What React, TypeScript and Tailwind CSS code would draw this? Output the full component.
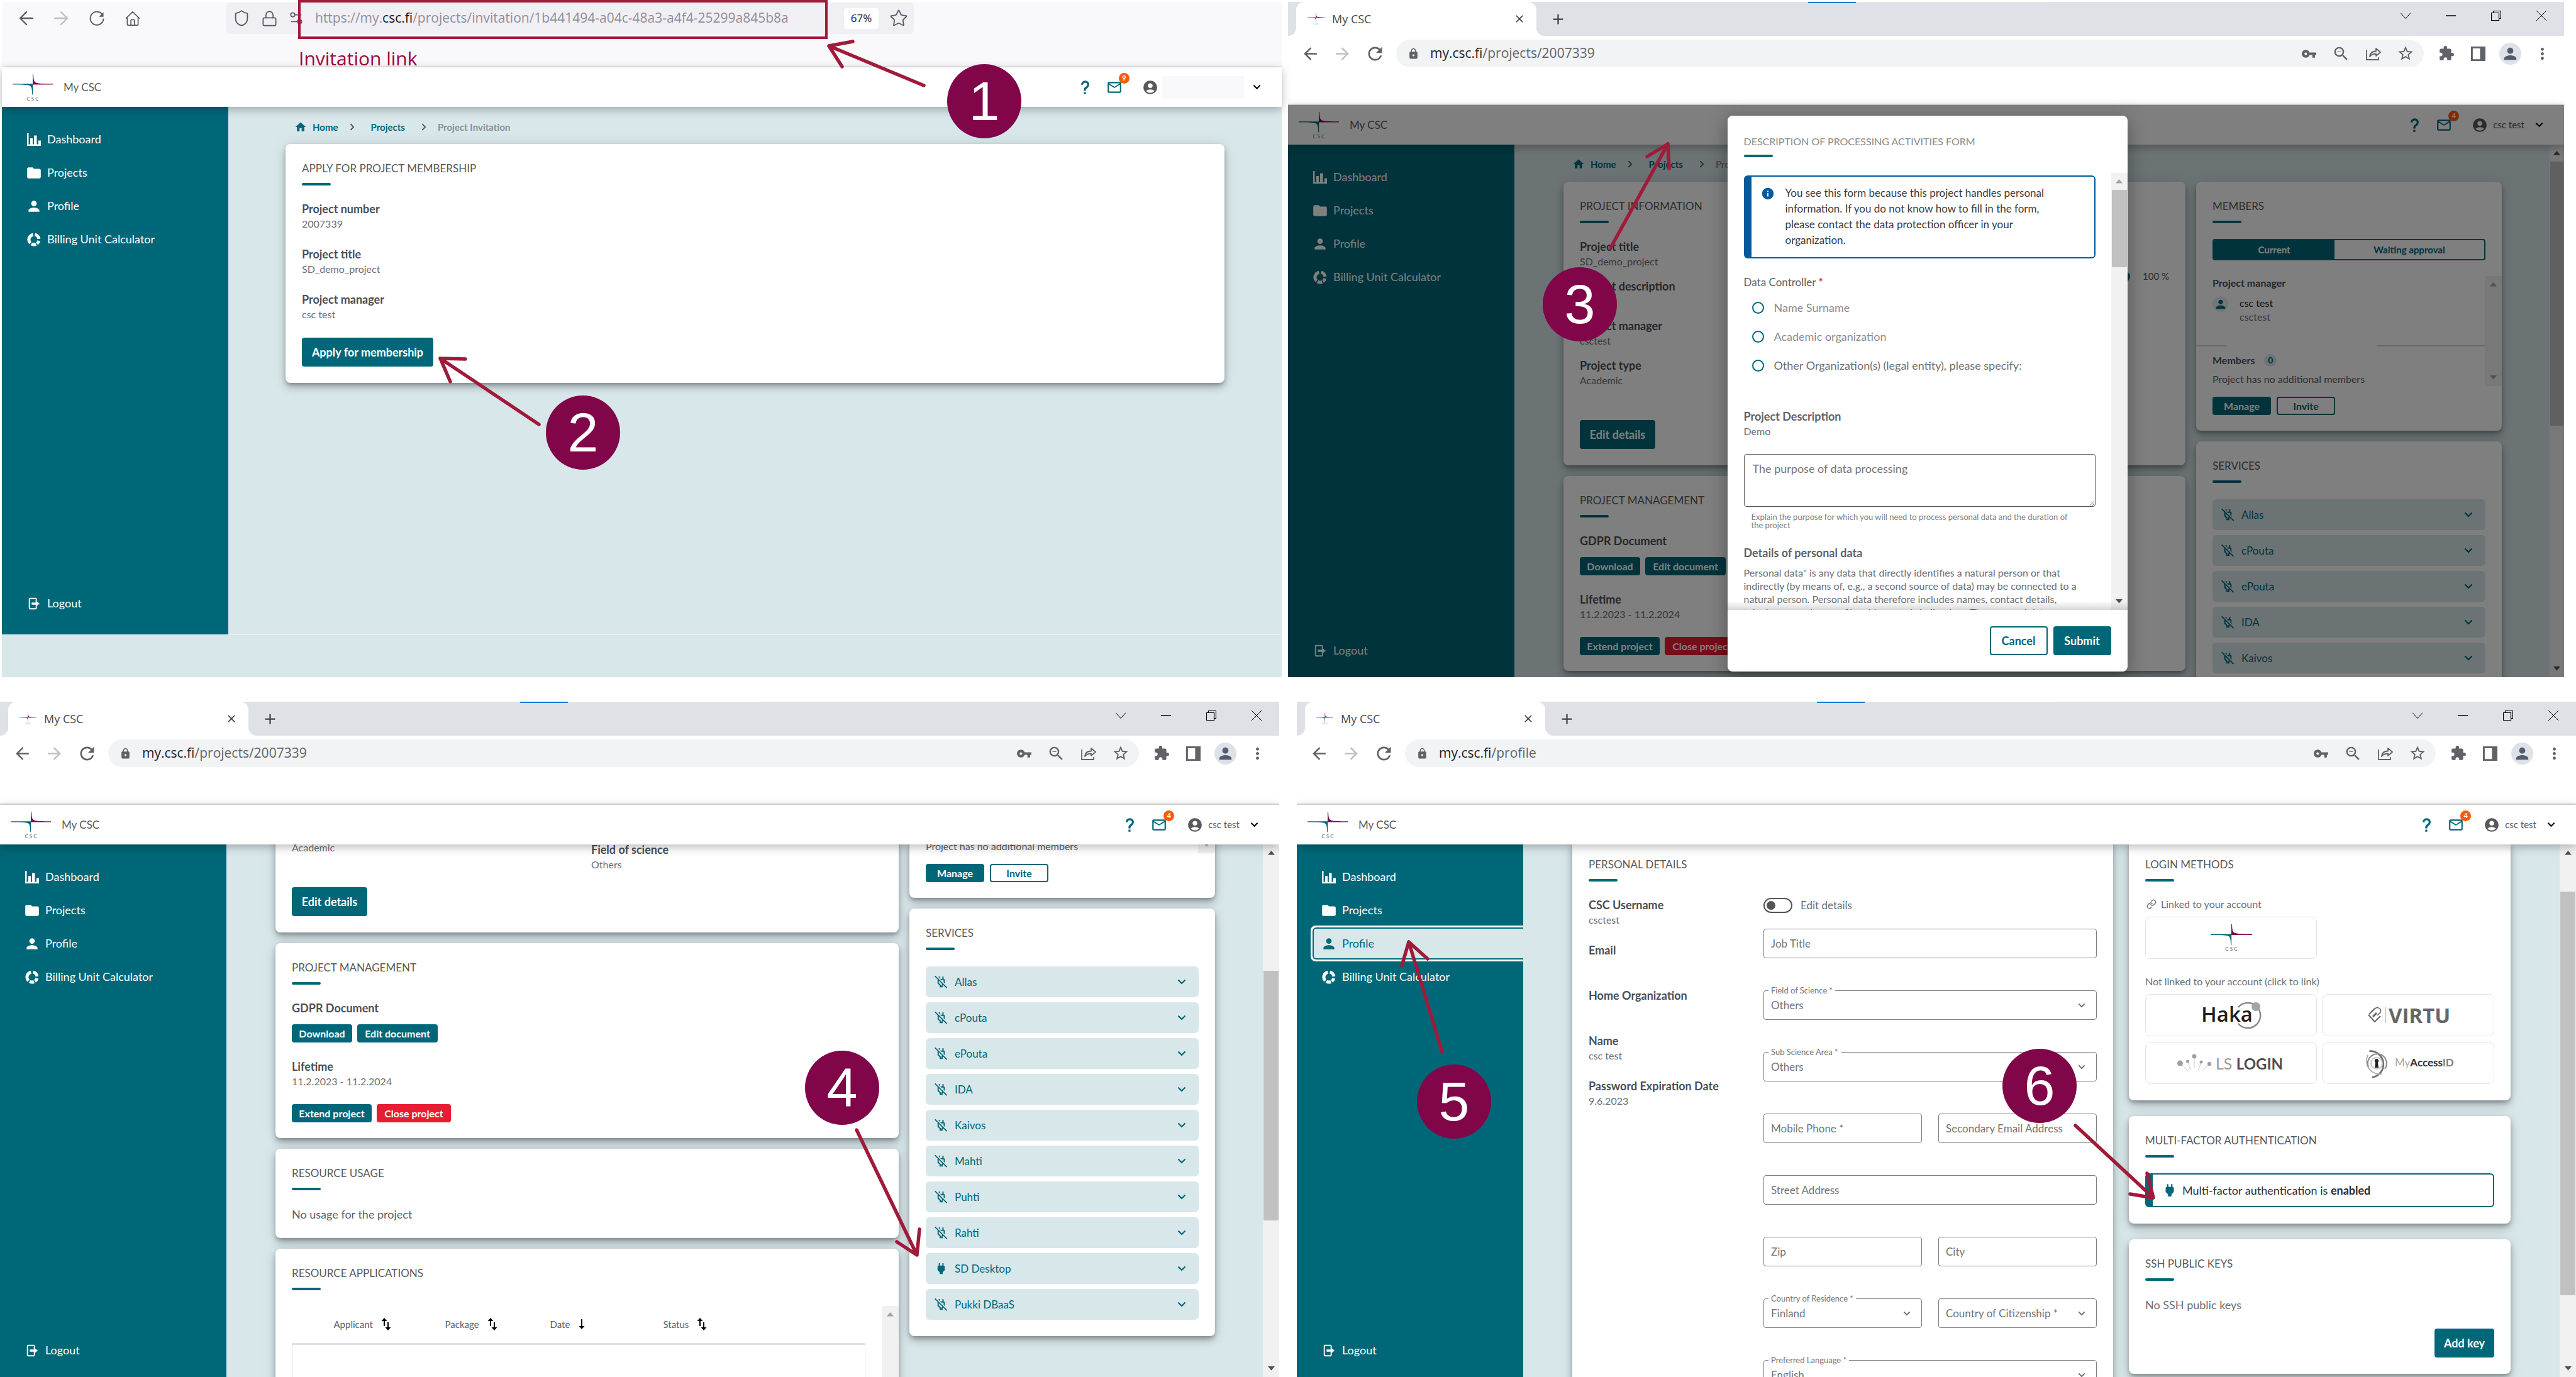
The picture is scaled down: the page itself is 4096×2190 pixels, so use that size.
import React, { useId } from "react";
import {
  MdAccountCircle,
  MdAdd,
  MdArrowBack,
  MdArrowForward,
  MdClose,
  MdExtension,
  MdFolder,
  MdHome,
  MdInfo,
  MdLock,
  MdMailOutline,
  MdMoreVert,
  MdOutlineZoomOut,
  MdPerson,
  MdRefresh,
  MdStarOutline,
  MdVpnKey,
} from "react-icons/md";
import { ArrowLeft, ArrowRight, Lock, Link as LinkIcon, Settings2, Shield, Star } from "lucide-react";

/* ---------- icons ---------- */

type IconProps = { className?: string };

function CscMark({ className }: IconProps) {
  return (
    <svg viewBox="0 0 64 42" className={className} aria-label="CSC" role="img">
      <path d="M32 16.600V0h1c.3 8 .8 12 4.200 13.400C41 14.900 50 15 64 15.200v1.400z" fill="#7d0552" />
      <path d="M32.200 15.200V32.500h-1c-.3-9-.8-13-4.200-14.400C23 16.800 14 16.700 0 16.600v-1.400z" fill="#006778" />
      <text x="32" y="41.500" textAnchor="middle" fontSize="8" fill="#5f6a70" fontFamily="Lato, sans-serif">
        C S C
      </text>
    </svg>
  );
}

function BarsIcon({ className }: IconProps) {
  return (
    <svg viewBox="0 0 22 20" className={className} fill="currentColor" aria-hidden="true">
      <path d="M0 0h2.500v17.500H5V8h4v9.500h2V3.500h4.500v14H18v-6h4V20H0z" />
    </svg>
  );
}

function DonutIcon({ className }: IconProps) {
  return (
    <svg viewBox="0 0 22 22" className={className} fill="none" stroke="currentColor" strokeWidth="5" aria-hidden="true">
      <path d="M12.5 3.1A8 8 0 0 1 18.9 9.8" />
      <path d="M18.8 12.8A8 8 0 0 1 15.6 17.5" />
      <path d="M14.2 18.4A8 8 0 0 1 7 17.9" />
      <path d="M5.3 16.7A8 8 0 0 1 9.4 3.2" />
    </svg>
  );
}

function LogoutIcon({ className }: IconProps) {
  return (
    <svg viewBox="0 0 24 24" className={className} fill="currentColor" aria-hidden="true">
      <path d="M5 2h10a2 2 0 0 1 2 2v4h-2V4H5v16h10v-4h2v4a2 2 0 0 1-2 2H5a2 2 0 0 1-2-2V4a2 2 0 0 1 2-2z" />
      <path d="M8 10h7V6.500L22 12l-7 5.500V14H8z" />
    </svg>
  );
}

function PlugIcon({ className }: IconProps) {
  return (
    <svg viewBox="0 0 24 24" className={className} fill="currentColor" aria-hidden="true">
      <path d="M16,7V3H14V7H10V3H8V7H8C7,7 6,8 6,9V14.5L9.5,18V21H14.5V18L18,14.5V9C18,8 17,7 16,7Z" />
    </svg>
  );
}

function PlugOffIcon({ className }: IconProps) {
  return (
    <svg viewBox="0 0 24 24" className={className} fill="currentColor" aria-hidden="true">
      <path d="M22.11 21.46L2.39 1.73L1.11 3L6.25 8.14C6.1 8.41 6 8.7 6 9V14.5L9.5 18V21H14.5V18L15.31 17.2L20.84 22.73L22.11 21.46M13.09 16.59L12.5 17.17V19H11.5V17.17L8 13.65V9.89L13.89 15.79L13.09 16.59M12.2 9L10.2 7H14V3H16V7C17 7 18 8 18 9V14.5L17.85 14.65L16 12.8V9H12.2M10 6.8L8 4.8V3H10V6.8Z" />
    </svg>
  );
}

function HelpIcon({ className }: IconProps) {
  return (
    <svg viewBox="6 2 12 20" className={className} fill="currentColor" aria-hidden="true">
      <path d="M10,19H13V22H10V19M12,2C17.35,2.22 19.68,7.62 16.5,11.67C15.67,12.67 14.33,13.33 13.67,14.17C13,15 13,16 13,17H10C10,15.33 10,13.92 10.67,12.92C11.33,11.92 12.67,11.33 13.5,10.67C15.92,8.43 15.32,5.26 12,5A3,3 0 0,0 9,8H6A6,6 0 0,1 12,2Z" />
    </svg>
  );
}

function SortIcon({ className }: IconProps) {
  return (
    <svg viewBox="0 0 16 20" className={className} fill="#000" aria-hidden="true">
      <path d="M4 5v8h2V5h3.500L5 0 .500 5zM10 7h2v8h3.500L11 20l-4.500-5H10z" />
    </svg>
  );
}

function Caret({ className }: IconProps) {
  return (
    <svg viewBox="0 0 14 9" className={className} fill="none" stroke="currentColor" aria-hidden="true">
      <path d="M1.5 1.5L7 7l5.5-5.5" strokeWidth="2.200" />
    </svg>
  );
}

function ShareIcon({ className }: IconProps) {
  return (
    <svg viewBox="0 0 24 24" className={className} fill="none" stroke="currentColor" strokeWidth="1.800" aria-hidden="true">
      <path d="M1 6v16h19v-4" />
      <path d="M6 17c.5-6 4-8.5 10-8.500V4l7 6-7 6v-3.500c-5 0-7.5 1-10 4.500z" strokeLinejoin="round" />
    </svg>
  );
}

function SidePanelIcon({ className }: IconProps) {
  return (
    <svg viewBox="0 0 24 24" className={className} fill="currentColor" aria-hidden="true">
      <path fillRule="evenodd" d="M0 0h24v24H0zM3 3v18h12V3z" />
    </svg>
  );
}

function HouseLine({ className }: IconProps) {
  return (
    <svg viewBox="0 0 24 24" className={className} fill="none" stroke="currentColor" strokeWidth="1.800" strokeLinejoin="round" strokeLinecap="round" aria-hidden="true">
      <path d="M1 11.500L12 1l11 10.500M3 10v12a1 1 0 0 0 1 1h16a1 1 0 0 0 1-1V10M9 23v-8a1 1 0 0 1 1-1h4a1 1 0 0 1 1 1v8" />
    </svg>
  );
}

function ReloadLine({ className }: IconProps) {
  return (
    <svg viewBox="0 0 24 24" className={className} fill="none" stroke="currentColor" strokeWidth="2" strokeLinecap="round" aria-hidden="true">
      <path d="M21.500 6A11 11 0 1 0 23 13" />
      <path d="M23 1.500V9h-7.500z" fill="currentColor" stroke="none" />
    </svg>
  );
}

/* ---------- shared building blocks ---------- */

function Triangle({ up, dark }: { up?: boolean; dark?: boolean }) {
  return (
    <svg viewBox="0 0 10 6" className={dark ? "w-[11px] text-[#4f4f4f]" : "w-[11px] text-[#a3a3a3]"} fill="currentColor" aria-hidden="true">
      <path d={up ? "M0 6L5 0l5 6z" : "M0 0l5 6 5-6z"} />
    </svg>
  );
}

function ScrollTrack({ className, children, upDark = true, downDark = true }: { className: string; children?: React.ReactNode; upDark?: boolean; downDark?: boolean }) {
  return (
    <div aria-hidden="true" className={`flex shrink-0 flex-col items-center bg-[#f1f1f1] ${className}`}>
      <span className="flex h-[27px] items-center">
        <Triangle up dark={upDark} />
      </span>
      <div className="flex min-h-0 w-full flex-1 flex-col px-px">{children}</div>
      <span className="flex h-[27px] items-center">
        <Triangle dark={downDark} />
      </span>
    </div>
  );
}

function Card({ title, className = "", children }: { title: string; className?: string; children?: React.ReactNode }) {
  return (
    <section
      className={`rounded-lg bg-white px-[26px] pt-[27px] shadow-[0_4px_7px_-1px_rgba(0,0,0,0.3),0_8px_13px_rgba(0,0,0,0.14),0_1px_24px_rgba(0,0,0,0.1)] ${className}`}
    >
      <h2 className="text-[17px] leading-6 whitespace-nowrap text-[#595959]">{title}</h2>
      <div className="mt-[11px] h-1 w-[46px] rounded-sm bg-[#006778]" />
      {children}
    </section>
  );
}

function Info({ label, value }: { label: string; value?: string }) {
  return (
    <div className="h-[46px] whitespace-nowrap">
      <dt className="text-[18px] leading-[23px] font-bold text-[#4a4f57]">{label}</dt>
      {value && <dd className="text-base leading-[23px] text-[#6b6f78]">{value}</dd>}
    </div>
  );
}

const bigButton = "h-[46px] rounded text-[18px] font-bold whitespace-nowrap";
const smallButton = "h-[29px] rounded text-base leading-none font-bold whitespace-nowrap";

function CscHeader({ count, user }: { count: string; user?: string }) {
  return (
    <header className="relative z-10 flex h-[63px] shrink-0 items-center bg-white pr-[33px] pl-[17px] shadow-[0_4px_14px_rgba(0,0,0,0.28)]">
      <CscMark className="h-[42px] w-16" />
      <span className="ml-[17px] text-[17px] text-[#595959]">My CSC</span>
      <div className="ml-auto flex items-center">
        <button type="button" aria-label="Help" className="mr-[29px] text-[#006778]">
          <HelpIcon className="h-[22px] w-[13px]" />
        </button>
        <button type="button" aria-label="Messages" className="relative mr-[35px] text-[#006778]">
          <MdMailOutline className="-mx-[2px] h-[26px] w-[26px]" />
          <span className="absolute -top-[10px] -right-[13px] flex h-[17px] w-[17px] items-center justify-center rounded-full bg-[#ff5a00] text-[11px] font-bold text-white">
            {count}
          </span>
        </button>
        <button type="button" className="flex items-center">
          <MdAccountCircle className="-m-[2px] h-[26px] w-[26px] text-[#595959]" />
          {user ? (
            <span className="mr-[17px] ml-[10px] text-[15px] text-[#595959]">{user}</span>
          ) : (
            <span className="mr-[14px] ml-2 h-[36px] w-[130px] bg-[#f9f9fb]" />
          )}
          <Caret className="h-[9px] w-[13px] text-black" />
        </button>
      </div>
    </header>
  );
}

const navItems = [
  { name: "Dashboard", icon: <BarsIcon className="h-5 w-[22px]" /> },
  { name: "Projects", icon: <MdFolder className="-m-[2px] h-[26px] w-[26px]" /> },
  { name: "Profile", icon: <MdPerson className="-m-[2px] h-[26px] w-[26px]" /> },
  { name: "Billing Unit Calculator", icon: <DonutIcon className="h-[22px] w-[22px]" /> },
];

function Sidebar({ active, logoutClass = "mb-4" }: { active?: string; logoutClass?: string }) {
  return (
    <nav className="flex w-[360px] shrink-0 flex-col bg-[#006778] pt-[25px] text-[18px] text-white">
      {navItems.map((item) =>
        item.name === active ? (
          <a
            key={item.name}
            href="#profile"
            className="-my-[2px] ml-[22px] block h-[57px] rounded-l-lg bg-white py-[3px] pl-[3px] text-[#006778]"
          >
            <span className="flex h-full items-center gap-[10px] rounded-l-md border-y-2 border-l-2 border-[#006778] bg-[#d8e7ea] pl-[13px]">
              {item.icon}
              {item.name}
            </span>
          </a>
        ) : (
          <a key={item.name} href="#nav" className="flex h-[53px] items-center gap-[10px] pl-10">
            {item.icon}
            {item.name}
          </a>
        ),
      )}
      <a href="#logout" className={`mt-auto flex h-[53px] items-center gap-[10px] pl-10 ${logoutClass}`}>
        <LogoutIcon className="h-[22px] w-[22px]" />
        Logout
      </a>
    </nav>
  );
}

function Breadcrumb({ last }: { last: string }) {
  return (
    <nav aria-label="Breadcrumb" className="flex h-6 items-center pl-[14px] text-[15px] font-bold text-[#006778]">
      <MdHome className="mr-[9px] h-5 w-5" />
      <a href="#home">Home</a>
      <Caret className="mr-6 ml-4 h-[8px] w-[12px] -rotate-90 text-[#595959]" />
      <a href="#projects">Projects</a>
      <Caret className="mr-4 ml-6 h-[8px] w-[12px] -rotate-90 text-[#595959]" />
      <span className="whitespace-nowrap text-[#8a8f94]">{last}</span>
    </nav>
  );
}

/* ---------- browser frames ---------- */

function ChromeFrame({ host, path, children, grow = "flex-1" }: { host: string; path: string; children: React.ReactNode; grow?: string }) {
  const side = "flex w-[51px] items-center justify-center";
  return (
    <section className={`relative flex min-h-0 min-w-0 flex-col overflow-hidden bg-white ${grow}`} style={{ fontFamily: "Lato, sans-serif" }}>
      <div className="relative flex h-[54px] shrink-0 items-center bg-[#dee1e6]" style={{ fontFamily: '"Open Sans", sans-serif' }}>
        <div className="absolute top-0 left-[827px] flex h-[2px] w-[382px] bg-[#e5e5e5]">
          <span className="w-[76px] bg-[#0078d7]" />
        </div>
        <span className="h-[14px] w-[13px] self-end bg-white">
          <span className="block h-full rounded-br-[13px] bg-[#dee1e6]" />
        </span>
        <div className="flex h-full w-[382px] items-center rounded-t-[13px] bg-white pr-[17px] pl-[18px]">
          <CscMark className="h-[20px] w-[27px]" />
          <span className="ml-3 text-[18px] text-[#45474a]">My CSC</span>
          <button type="button" aria-label="Close tab" className="ml-auto text-[#3c4043]">
            <MdClose className="h-[20px] w-[20px]" />
          </button>
        </div>
        <span className="h-[14px] w-[13px] self-end bg-white">
          <span className="block h-full rounded-bl-[13px] bg-[#dee1e6]" />
        </span>
        <button type="button" aria-label="New tab" className="ml-[8px] text-[#3c4043]">
          <MdAdd className="h-[27px] w-[27px]" />
        </button>
        <div className="mr-[28px] ml-auto flex h-[44px] items-center gap-[56px] self-start text-black">
          <svg viewBox="0 0 16 16" className="h-4 w-4" fill="none" stroke="currentColor" aria-hidden="true"><path d="M0 3.500l8 9 8-9" /></svg>
          <svg viewBox="0 0 16 16" className="h-4 w-4" fill="none" stroke="currentColor" aria-hidden="true"><path d="M0 8h16" strokeWidth="1.500" /></svg>
          <svg viewBox="0 0 16 16" className="h-4 w-4" fill="none" stroke="currentColor" aria-hidden="true"><path d="M.5 3.500h12v12H.5zM3.500 3.500v-3h12v12h-3" strokeWidth="1.200" /></svg>
          <svg viewBox="0 0 16 16" className="h-4 w-4" fill="none" stroke="currentColor" aria-hidden="true"><path d="M0 0l16 16M16 0L0 16" /></svg>
        </div>
      </div>
      <div className="flex h-[110px] shrink-0 border-b-2 border-[#dadada] pt-[6px]" style={{ fontFamily: '"Open Sans", sans-serif' }}>
        <div className="flex h-[44px] w-full items-center pl-[20px] text-[#5f6368]">
          <MdArrowBack className="h-[31px] w-[31px]" />
          <MdArrowForward className="ml-[20px] h-[31px] w-[31px] text-[#bdc1c6]" />
          <MdRefresh className="ml-[20px] h-[33px] w-[33px]" />
          <div className="ml-[17px] flex h-full min-w-0 flex-1 items-center rounded-full bg-[#f1f3f4] pr-[4px] pl-[18px]">
            <MdLock className="h-[19px] w-[19px]" />
            <span className="ml-[17px] text-[21px] text-[#5f6368]">
              <span className="text-[#202124]">{host}</span>
              {path}
            </span>
            <div className="ml-auto flex">
              <span className={side}><MdVpnKey className="h-[25px] w-[25px]" /></span>
              <span className={side}><MdOutlineZoomOut className="h-[29px] w-[29px]" /></span>
              <span className={side}><ShareIcon className="h-[24px] w-[24px]" /></span>
              <span className={side}><MdStarOutline className="h-[28px] w-[28px]" /></span>
            </div>
          </div>
          <div className="mr-[9px] ml-[10px] flex items-center">
            <span className={side}><MdExtension className="h-[26px] w-[26px]" /></span>
            <span className={side}><SidePanelIcon className="h-[23px] w-[23px]" /></span>
            <span className={side}>
              <span className="flex h-[35px] w-[35px] items-center justify-center rounded-full bg-[#dee1e6]">
                <MdPerson className="h-[29px] w-[29px] text-[#525c70]" />
              </span>
            </span>
            <span className={side}><MdMoreVert className="h-[29px] w-[29px]" /></span>
          </div>
        </div>
      </div>
      {children}
    </section>
  );
}

/* ---------- first window: project invitation ---------- */

function InvitationWindow() {
  return (
    <section className="flex min-h-0 min-w-0 flex-[2035] flex-col bg-[#d8e7ea]" style={{ fontFamily: "Lato, sans-serif" }}>
      <div className="flex h-[104px] shrink-0 border-b border-[#bdbdbd] bg-[#f9f9fb]" style={{ fontFamily: '"Open Sans", sans-serif' }}>
        <div className="mt-[1px] flex h-[50px] w-full items-center pl-[22px] text-[#5b5b66]">
          <ArrowLeft className="h-[34px] w-[34px]" strokeWidth={1.6} />
          <ArrowRight className="ml-[21px] h-[34px] w-[34px] text-[#bdbdc2]" strokeWidth={1.6} />
          <ReloadLine className="ml-[28px] h-[23px] w-[24px]" />
          <HouseLine className="ml-[33px] h-[23px] w-[24px]" />
          <div className="ml-[137px] flex h-full w-[1093px] items-center rounded-md bg-[#f0f0f4] pl-[10px]">
            <Shield className="h-[28px] w-[28px]" strokeWidth={1.6} />
            <Lock className="ml-[17px] h-[27px] w-[27px]" strokeWidth={1.6} />
            <Settings2 className="ml-[16px] h-[26px] w-[26px]" strokeWidth={1.6} />
            <span className="ml-[17px] text-[21px] whitespace-nowrap text-[#8f8f9b]">
              https://my.<span className="text-[#15141a]">csc.fi</span>/projects/invitation/1b441494-a04c-48a3-a4f4-25299a845b8a
            </span>
            <span className="mr-[17px] ml-auto flex h-[33px] w-[55px] items-center justify-center rounded bg-white text-[17px] text-[#15141a]">67%</span>
            <Star className="mr-[9px] h-[30px] w-[30px]" strokeWidth={1.5} />
          </div>
        </div>
      </div>
      <CscHeader count="9" />
      <div className="flex min-h-0 flex-1 border-b border-[#eef4f5]">
        <Sidebar logoutClass="mb-[23px]" />
        <main className="min-w-0 flex-1 px-[91px] pt-5">
          <Breadcrumb last="Project Invitation" />
          <Card title="APPLY FOR PROJECT MEMBERSHIP" className="mt-[15px] pb-[26px]">
            <dl className="mt-[26px] flex flex-col gap-[26px]">
              <Info label="Project number" value="2007339" />
              <Info label="Project title" value="SD_demo_project" />
              <Info label="Project manager" value="csc test" />
            </dl>
            <button type="button" className={`mt-[26px] w-[209px] bg-[#006778] text-white ${bigButton}`}>Apply for membership</button>
          </Card>
        </main>
      </div>
      <div className="h-[67px] shrink-0" />
    </section>
  );
}

/* ---------- project page, used in two windows ---------- */

const services = ["Allas", "cPouta", "ePouta", "IDA", "Kaivos", "Mahti", "Puhti", "Rahti", "SD Desktop", "Pukki DBaaS"];

function ResourceCards() {
  return (
    <>
      <Card title="RESOURCE USAGE" className="pb-[26px]">
        <p className="mt-[26px] text-[18px] leading-6 text-[#5a5f68]">No usage for the project</p>
      </Card>
      <Card title="RESOURCE APPLICATIONS" className="pb-0">
        <div className="mt-[25px] -mr-[26px] flex h-[260px]">
          <table className="mr-[26px] h-full min-w-0 flex-1 table-fixed border-collapse text-[15px] text-[#595f68]">
            <thead>
              <tr className="h-[60px]">
                <th scope="col" className="w-[243px] pl-[66px] text-left font-normal"><span className="flex items-center">Applicant<SortIcon className="ml-[13px] h-5 w-4" /></span></th>
                <th scope="col" className="w-[167px] text-left font-normal"><span className="flex items-center">Package<SortIcon className="ml-[13px] h-5 w-4" /></span></th>
                <th scope="col" className="w-[180px] text-left font-normal"><span className="flex items-center">Date
                  <svg viewBox="0 0 10 16" className="ml-[14px] h-4 w-[10px]" fill="#000" aria-hidden="true"><path d="M4 0h2v11h3.500L5 16 .5 11H4z" /></svg>
                </span></th>
                <th scope="col" className="text-left font-normal"><span className="flex items-center">Status<SortIcon className="ml-[13px] h-5 w-4" /></span></th>
              </tr>
            </thead>
            <tbody>
              <tr>
                <td colSpan={4} className="border border-t-[3px] border-[#e0e0e0]" />
              </tr>
            </tbody>
          </table>
          <ScrollTrack className="w-[27px]" upDark={false} downDark={false} />
        </div>
      </Card>
    </>
  );
}

function ProjectPage({ scrollClass = "", full = false }: { scrollClass?: string; full?: boolean }) {
  return (
    <main className="min-w-0 flex-1 overflow-hidden bg-[#d8e7ea] pr-[76px] pl-[78px]">
      <div className={`pt-[19px] ${scrollClass}`}>
        <Breadcrumb last="Project Details" />
        <div className="mt-4 flex items-start gap-[17px]">
          <div className="flex min-w-0 flex-1 flex-col gap-[17px]">
            <Card title="PROJECT INFORMATION" className="pb-[26px]">
              <div className="mt-[26px] flex">
                <dl className="flex w-[476px] flex-col gap-[17px]">
                  <Info label="Project title" value="SD_demo_project" />
                  <Info label="Project description" />
                  <Info label="Project manager" value="csctest" />
                  <Info label="Project type" value="Academic" />
                </dl>
                <div className="flex-1 pt-[47px]">
                  <div className="flex h-[23px] items-center gap-5 text-[15px] text-[#595959]">
                    <div className="h-4 flex-1 rounded-full bg-[#006778]" />
                    <span>100 %</span>
                  </div>
                  <dl className="mt-[146px]">
                    <Info label="Field of science" value="Others" />
                  </dl>
                </div>
              </div>
              <button type="button" className={`mt-[25px] w-[120px] bg-[#006778] text-white ${bigButton}`}>Edit details</button>
            </Card>
            <Card title="PROJECT MANAGEMENT" className="pb-[25px]">
              <h3 className="mt-[26px] text-[18px] leading-[23px] font-bold text-[#4a4f57]">GDPR Document</h3>
              <div className="mt-[14px] flex gap-2">
                <button type="button" className={`w-[96px] bg-[#006778] text-white ${smallButton}`}>Download</button>
                <button type="button" className={`w-[128px] bg-[#006778] text-white ${smallButton}`}>Edit document</button>
              </div>
              <dl className="mt-[27px]">
                <Info label="Lifetime" value="11.2.2023 - 11.2.2024" />
              </dl>
              <div className="mt-[25px] flex gap-2">
                <button type="button" className={`w-[127px] bg-[#006778] text-white ${smallButton}`}>Extend project</button>
                <button type="button" className={`w-[118px] bg-[#e81c32] text-white ${smallButton}`}>Close project</button>
              </div>
            </Card>
            {full && <ResourceCards />}
          </div>
          <div className="flex w-[486px] shrink-0 flex-col gap-[17px]">
            <Card title="MEMBERS" className="pb-[25px]">
              <div className="mt-[25px] flex h-[34px] overflow-hidden rounded border-2 border-[#006778] text-[15px] font-bold text-[#006778]">
                <button type="button" className="w-[192px] bg-[#006778] text-white">Current</button>
                <button type="button" className="flex-1">Waiting approval</button>
              </div>
              <div className="mt-[25px] -mr-[26px] flex">
                <div className="min-w-0 flex-1 whitespace-nowrap">
                  <h3 className="text-base leading-[22px] font-bold text-[#4a4f57]">Project manager</h3>
                  <div className="mt-[10px] flex gap-[18px]">
                    <span className="flex h-[25px] w-[25px] items-center justify-center rounded-full bg-[#e3eef0] text-[#006778]"><MdPerson className="h-[22px] w-[22px]" /></span>
                    <div className="text-base leading-[22px] text-[#6b6f78]">
                      <p className="text-[#22262b]">csc test</p>
                      <p>csctest</p>
                    </div>
                  </div>
                  <div className="mt-[34px] -ml-[26px] flex justify-between"><span className="h-[2px] w-[49px] bg-[#d5d5d5]" /><span className="h-[2px] w-[172px] bg-[#d5d5d5]" /></div>
                  <div className="mt-[11px] flex h-[22px] items-center text-base font-bold text-[#4a4f57]">
                    Members
                    <span className="ml-[15px] flex h-5 w-5 items-center justify-center rounded-full bg-[#d8e7ea] text-sm text-[#006778]">0</span>
                  </div>
                  <p className="mt-2 text-base leading-[22px] text-[#595f68]">Project has no additional members</p>
                </div>
                <ScrollTrack className="w-[27px]" upDark={false} downDark={false} />
              </div>
              <div className="mt-[17px] flex gap-[9px]">
                <button type="button" className={`w-[93px] bg-[#006778] text-white ${smallButton}`}>Manage</button>
                <button type="button" className={`w-[93px] border-2 border-[#006778] bg-white text-[#006778] ${smallButton}`}>Invite</button>
              </div>
            </Card>
            <Card title="SERVICES" className="pb-[26px]">
              <ul className="mt-[26px] flex flex-col gap-2">
                {(full ? services : services.slice(0, 5)).map((name) => (
                  <li key={name}>
                    <button type="button" className="flex h-[49px] w-full items-center rounded-md bg-[#d8e7ea] pr-[20px] pl-[13px] text-[17px] text-[#006778]">
                      {name === "SD Desktop" ? <PlugIcon className="h-[23px] w-[23px]" /> : <PlugOffIcon className="h-[23px] w-[23px]" />}
                      <span className="ml-[10px]">{name}</span>
                      <Caret className="ml-auto h-[9px] w-[14px]" />
                    </button>
                  </li>
                ))}
              </ul>
            </Card>
          </div>
        </div>
      </div>
    </main>
  );
}

/* ---------- second window: processing activities dialog ---------- */

function RadioRow({ label, textClass }: { label: string; textClass: string }) {
  return (
    <label className={`flex h-[26px] items-center gap-[16px] text-[18px] ${textClass}`}>
      <input type="radio" name="controller" className="h-[19px] w-[19px] appearance-none rounded-full border-2 border-[#006778]" />
      {label}
    </label>
  );
}

function ActivitiesDialog() {
  const purpose = useId();
  return (
    <div className="absolute inset-x-0 top-[164px] bottom-0 z-20 flex justify-center bg-black/50 pt-[17px] pb-[9px] pl-1">
      <div role="dialog" aria-label="Description of processing activities form" className="flex w-[636px] flex-col overflow-hidden rounded-lg bg-white shadow-[0_8px_30px_rgba(0,0,0,0.35)]">
        <div className="h-[91px] shrink-0 px-[26px] pt-[29px]">
          <h2 className="text-base leading-6 whitespace-nowrap text-[#8a8a8a]">DESCRIPTION OF PROCESSING ACTIVITIES FORM</h2>
          <div className="mt-[9px] h-1 w-[46px] rounded-sm bg-[#006778]" />
        </div>
        <div className="relative flex min-h-0 flex-1">
          <div className="min-w-0 flex-1 overflow-hidden pr-[25px] pl-[26px] text-[17px] whitespace-nowrap text-[#5f6368]">
            <div className="mt-1 flex rounded-md border-2 border-l-[12px] border-[#005a9b] pt-[13px] pb-[15px] pl-[16px]">
              <MdInfo className="mt-[3px] -ml-px h-[22px] w-[22px] shrink-0 text-[#005a9b]" />
              <p className="ml-[17px] leading-[25px] text-[#3a3a3a]">
                You see this form because this project handles personal
                <br />
                information. If you do not know how to fill in the form,
                <br />
                please contact the data protection officer in your
                <br />
                organization.
              </p>
            </div>
            <fieldset className="pl-[13px]">
              <legend className="-ml-[13px] pt-[26px] leading-6">
                Data Controller <span className="font-bold text-[#e81c32]">*</span>
              </legend>
              <div className="mt-[15px] flex flex-col gap-[20px]">
                <RadioRow label="Name Surname" textClass="text-[#8c8c8c]" />
                <RadioRow label="Academic organization" textClass="text-[#8c8c8c]" />
                <RadioRow label="Other Organization(s) (legal entity), please specify:" textClass="text-[#6f6f6f]" />
              </div>
            </fieldset>
            <h3 className="mt-[57px] text-[18px] leading-[23px] font-bold">Project Description</h3>
            <p className="text-base leading-[23px] text-[#6b6f78]">Demo</p>
            <textarea
              id={purpose}
              aria-label="The purpose of data processing"
              placeholder="The purpose of data processing"
              className="mt-[25px] block h-[84px] w-full rounded border border-[#555] px-[13px] py-[10px] text-[18px] leading-6 placeholder:text-[#757575]"
            />
            <p className="mt-[10px] pl-3 text-[13px] leading-[13px] text-[#808080]">
              Explain the purpose for which you will need to process personal data and the duration of
              <br />
              the project
            </p>
            <h3 className="mt-[26px] text-[18px] leading-[23px] font-bold">Details of personal data</h3>
            <p className="mt-[9px] text-base leading-[21px] text-[#6b6f78]">
              Personal data&quot; is any data that directly identifies a natural person or that
              <br />
              indirectly (by means of, e.g., a second source of data) may be connected to a
              <br />
              natural person. Personal data therefore includes names, contact details,
              <br />
              telephone number, profile address and similar data. The personal data
            </p>
          </div>
          <ScrollTrack className="w-[26px]" upDark={false}>
            <div className="h-[123px] bg-[#c1c1c1]" />
          </ScrollTrack>
          <div className="absolute inset-x-0 bottom-0 h-[14px] bg-linear-to-b from-transparent to-black/15" />
        </div>
        <div className="flex shrink-0 justify-end gap-[9px] px-[26px] pt-[26px] pb-[26px]">
          <button type="button" className={`w-[92px] border-2 border-[#006778] text-[#006778] ${bigButton}`}>Cancel</button>
          <button type="button" className={`w-[92px] bg-[#006778] text-white ${bigButton}`}>Submit</button>
        </div>
      </div>
    </div>
  );
}

/* ---------- fourth window: profile page ---------- */

const fieldBox = "h-[47px] w-full rounded border border-[#808080] bg-white px-[11px] text-[17px] text-[#757575] placeholder:text-[#757575]";

function TextField({ label }: { label: string }) {
  return <input type="text" aria-label={label} placeholder={label} className={`min-w-0 flex-1 ${fieldBox}`} />;
}

function SelectField({ label, value }: { label?: string; value: string }) {
  const id = useId();
  return (
    <div className="relative min-w-0 flex-1">
      {label && (
        <label htmlFor={id} className="absolute -top-[8px] left-[8px] bg-white px-1 text-[13px] leading-4 text-[#757575]">
          {label}
        </label>
      )}
      <select id={id} aria-label={label ? undefined : value} className={`appearance-none ${fieldBox}`}>
        <option>{value}</option>
      </select>
      <Caret className="absolute top-[20px] right-[18px] h-[8px] w-[12px] text-[#6b6b6b]" />
    </div>
  );
}

const loginTile = "flex h-[67px] items-center justify-center rounded-lg border border-[#e2e4e6] bg-white";

function ProfilePage() {
  return (
    <main className="min-w-0 flex-1 overflow-hidden bg-[#d8e7ea] px-[78px]">
      <div className="-mt-[7px] flex items-start gap-[25px]">
        <Card title="PERSONAL DETAILS" className="min-w-0 flex-1 pb-[60px]">
          <div className="mt-[26px] flex">
            <dl className="flex w-[278px] flex-col gap-[26px]">
              <Info label="CSC Username" value="csctest" />
              <Info label="Email" />
              <Info label="Home Organization" />
              <Info label="Name" value="csc test" />
              <Info label="Password Expiration Date" value="9.6.2023" />
            </dl>
            <form className="flex min-w-0 flex-1 flex-col gap-[51px]">
              <label className="-mb-[25px] flex h-[23px] items-center gap-[13px] text-[17px] text-[#6b6f78]">
                <input
                  type="checkbox"
                  role="switch"
                  className="flex h-[24px] w-[46px] appearance-none items-center rounded-full border-2 border-[#555] pl-[3px] before:block before:h-[14px] before:w-[14px] before:rounded-full before:bg-[#555]"
                />
                Edit details
              </label>
              <div className="flex"><TextField label="Job Title" /></div>
              <div className="flex"><SelectField label="Field of Science *" value="Others" /></div>
              <div className="flex"><SelectField label="Sub Science Area *" value="Others" /></div>
              <div className="flex gap-[26px]"><TextField label="Mobile Phone *" /><TextField label="Secondary Email Address" /></div>
              <div className="flex"><TextField label="Street Address" /></div>
              <div className="flex gap-[26px]"><TextField label="Zip" /><TextField label="City" /></div>
              <div className="flex gap-[26px]"><SelectField label="Country of Residence *" value="Finland" /><SelectField value="Country of Citizenship *" /></div>
              <div className="flex"><SelectField label="Preferred Language *" value="English" /></div>
            </form>
          </div>
        </Card>
        <div className="flex w-[607px] shrink-0 flex-col gap-[25px]">
          <Card title="LOGIN METHODS" className="pb-[26px]">
            <p className="mt-[25px] flex h-[22px] items-center gap-[7px] pl-[2px] text-base text-[#6b6f78]">
              <LinkIcon className="h-4 w-4" />
              Linked to your account
            </p>
            <div className="mt-[9px] grid grid-cols-2 gap-[9px]">
              <button type="button" className={loginTile} aria-label="CSC"><CscMark className="h-[43px] w-[66px]" /></button>
            </div>
            <p className="mt-[25px] text-base leading-[22px] text-[#6b6f78]">Not linked to your account (click to link)</p>
            <div className="mt-[9px] grid grid-cols-2 gap-[9px]">
              <button type="button" className={loginTile} aria-label="Haka">
                <svg viewBox="0 0 96 46" className="h-[46px] w-[96px]" aria-hidden="true">
                  <path d="M59 10A20 20 0 1 1 59 36" fill="none" stroke="#8a8a8a" strokeWidth="2.500" />
                  <text x="0" y="33" fontSize="33" fontWeight="600" fill="#1f1f1f" stroke="#fff" strokeWidth="3" paintOrder="stroke" fontFamily="'Open Sans', sans-serif">Haka</text>
                  <circle cx="87" cy="9" r="7" fill="#a3a3a3" />
                </svg>
              </button>
              <button type="button" className={loginTile} aria-label="Virtu">
                <svg viewBox="0 0 130 28" className="h-[28px] w-[130px]" aria-hidden="true">
                  <g fill="none" stroke="#666" strokeWidth="1.600">
                    <path d="M2 12L11 3M1 13l10 11 9-9" strokeWidth="2" />
                    <path d="M8 6l5-4c5-2 10 4 6 8l-4 4" />
                    <path d="M8 16l6-6" strokeWidth="3" />
                    <path d="M27.500 1v25" strokeWidth=".8" />
                  </g>
                  <text x="33" y="26" fontSize="33" fontWeight="700" fill="#666" fontFamily="'Open Sans', sans-serif">VIRTU</text>
                </svg>
              </button>
              <button type="button" className={loginTile} aria-label="LS Login">
                <svg viewBox="0 0 172 32" className="h-[32px] w-[172px]" aria-hidden="true">
                  <g stroke="#c8c8c8" strokeWidth="1">
                    <path d="M7 18l11 11M17 15l4 12M27 6v18M38 16l-5 11M50 19L39 28" />
                  </g>
                  <g fill="#a0a0a0">
                    <circle cx="4.500" cy="16" r="4.500" /><circle cx="16.500" cy="13" r="2.500" /><circle cx="27" cy="5" r="3.500" /><circle cx="38" cy="14" r="2.500" /><circle cx="51" cy="17" r="3.200" />
                  </g>
                  <text x="61" y="26" fontSize="25" fill="#9a9a9a" fontFamily="Lato, sans-serif">
                    LS <tspan fontSize="24" fontWeight="700" fill="#4d4d4d">LOGIN</tspan>
                  </text>
                </svg>
              </button>
              <button type="button" className={loginTile} aria-label="MyAccessID">
                <svg viewBox="0 0 146 48" className="h-[48px] w-[146px]" aria-hidden="true">
                  <g fill="none">
                    <path d="M17 2A21 21 0 0 1 8 43" stroke="#6e6e6e" strokeWidth="2.800" transform="rotate(-18 22 24)" />
                    <path d="M8 11A21 21 0 0 0 30 41" stroke="#b0b0b0" strokeWidth="2" />
                    <path d="M9 30A15 15 0 1 1 35 33" stroke="#8a8a8a" strokeWidth="2" />
                    <circle cx="22" cy="24" r="9" stroke="#c6c6c6" strokeWidth="2" />
                  </g>
                  <path d="M22 17a3.200 3.200 0 0 1 2 5.700l1 8.300h-6l1-8.300a3.200 3.200 0 0 1 2-5.700z" fill="#222" />
                  <text x="51" y="29" fontSize="17" fontWeight="700" fontFamily="Lato, sans-serif">
                    <tspan fontWeight="400" fill="#a8a8a8">My</tspan><tspan fill="#333">Access</tspan><tspan fill="#7a7a7a">ID</tspan>
                  </text>
                </svg>
              </button>
            </div>
          </Card>
          <Card title="MULTI-FACTOR AUTHENTICATION" className="pb-[26px]">
            <div className="mt-[25px] flex h-[54px] items-center rounded-md border-2 border-l-[12px] border-[#006778] pl-[14px] text-[18px] text-[#2f2f2f]">
              <PlugIcon className="h-[26px] w-[26px] text-[#006778]" />
              <p className="ml-[7px]">
                Multi-factor authentication is <b>enabled</b>
              </p>
            </div>
          </Card>
          <Card title="SSH PUBLIC KEYS" className="pb-[26px]">
            <p className="mt-[26px] text-[18px] leading-6 text-[#6b6f78]">No SSH public keys</p>
            <div className="mt-[26px] flex justify-end">
              <button type="button" className={`w-[95px] bg-[#006778] text-white ${bigButton}`}>Add key</button>
            </div>
          </Card>
        </div>
      </div>
    </main>
  );
}

/* ---------- numbered steps and arrows over the windows ---------- */

const arrows = [
  "M1469 136L1318 73M1356 66L1318 73L1339 106",
  "M857 675L700 570M740 571L700 570L716 607",
  "M2561 394L2652 229M2619 249L2652 229L2654 268",
  "M1362 1797L1458 1996M1462 1955L1458 1996L1426 1975",
  "M2293 1673L2240 1498M2270 1525L2240 1498L2229 1536",
  "M3300 1790L3424 1905M3414 1866L3424 1905L3387 1899",
];

function Step({ n, place }: { n: number; place: string }) {
  return (
    <span className={`absolute flex h-[118px] w-[118px] items-center justify-center rounded-full bg-[#800549] text-[88px] leading-none text-white ${place}`}>
      {n}
    </span>
  );
}

function Annotations() {
  return (
    <div className="pointer-events-none absolute inset-0 z-30 overflow-hidden" style={{ fontFamily: '"Liberation Sans", sans-serif' }}>
      <div className="absolute top-0 left-[474px] h-[62px] w-[842px] border-4 border-[#a01a3a]" />
      <p className="absolute top-[72px] left-[475px] text-[30px] leading-[42px] text-[#a0003c]" style={{ fontFamily: '"Open Sans", sans-serif' }}>Invitation link</p>
      <svg viewBox="0 0 4096 2190" className="absolute top-0 left-0 h-[2190px] w-[4096px]" fill="none" stroke="#a01a3a" strokeWidth="5.500" strokeLinecap="round" strokeLinejoin="round" aria-hidden="true">
        {arrows.map((d) => (
          <path key={d} d={d} />
        ))}
      </svg>
      <Step n={1} place="top-[102px] left-[1506px]" />
      <Step n={2} place="top-[629px] left-[868px]" />
      <Step n={3} place="top-[425px] left-[2453px]" />
      <Step n={4} place="top-[1671px] left-[1280px]" />
      <Step n={5} place="top-[1693px] left-[2253px]" />
      <Step n={6} place="top-[1668px] left-[3184px]" />
    </div>
  );
}

export default function App() {
  return (
    <div className="relative flex h-screen flex-col gap-[39px] overflow-hidden bg-white pt-[3px]">
      <div className="flex min-h-0 flex-1 gap-[10px] pr-[19px] pl-[3px]">
        <InvitationWindow />
        <ChromeFrame host="my.csc.fi" path="/projects/2007339" grow="flex-[2029]">
          <CscHeader count="4" user="csc test" />
          <div className="flex min-h-0 flex-1">
            <Sidebar />
            <ProjectPage />
            <ScrollTrack className="w-[23px]">
              <div className="flex-[53] bg-[#c1c1c1]" />
              <div className="flex-[47]" />
            </ScrollTrack>
          </div>
          <ActivitiesDialog />
        </ChromeFrame>
      </div>
      <div className="flex min-h-0 flex-1 gap-[28px]">
        <ChromeFrame host="my.csc.fi" path="/projects/2007339">
          <CscHeader count="4" user="csc test" />
          <div className="flex min-h-0 flex-1">
            <Sidebar />
            <ProjectPage scrollClass="-mt-[370px]" full />
            <ScrollTrack className="w-[26px]">
              <div className="flex-[22]" />
              <div className="flex-[50] bg-[#c1c1c1]" />
              <div className="flex-[28]" />
            </ScrollTrack>
          </div>
        </ChromeFrame>
        <ChromeFrame host="my.csc.fi" path="/profile">
          <CscHeader count="4" user="csc test" />
          <div className="flex min-h-0 flex-1">
            <Sidebar active="Profile" />
            <ProfilePage />
            <ScrollTrack className="w-[26px]">
              <div className="flex-[6]" />
              <div className="flex-[81] bg-[#c1c1c1]" />
              <div className="flex-[13]" />
            </ScrollTrack>
          </div>
        </ChromeFrame>
      </div>
      <Annotations />
    </div>
  );
}
